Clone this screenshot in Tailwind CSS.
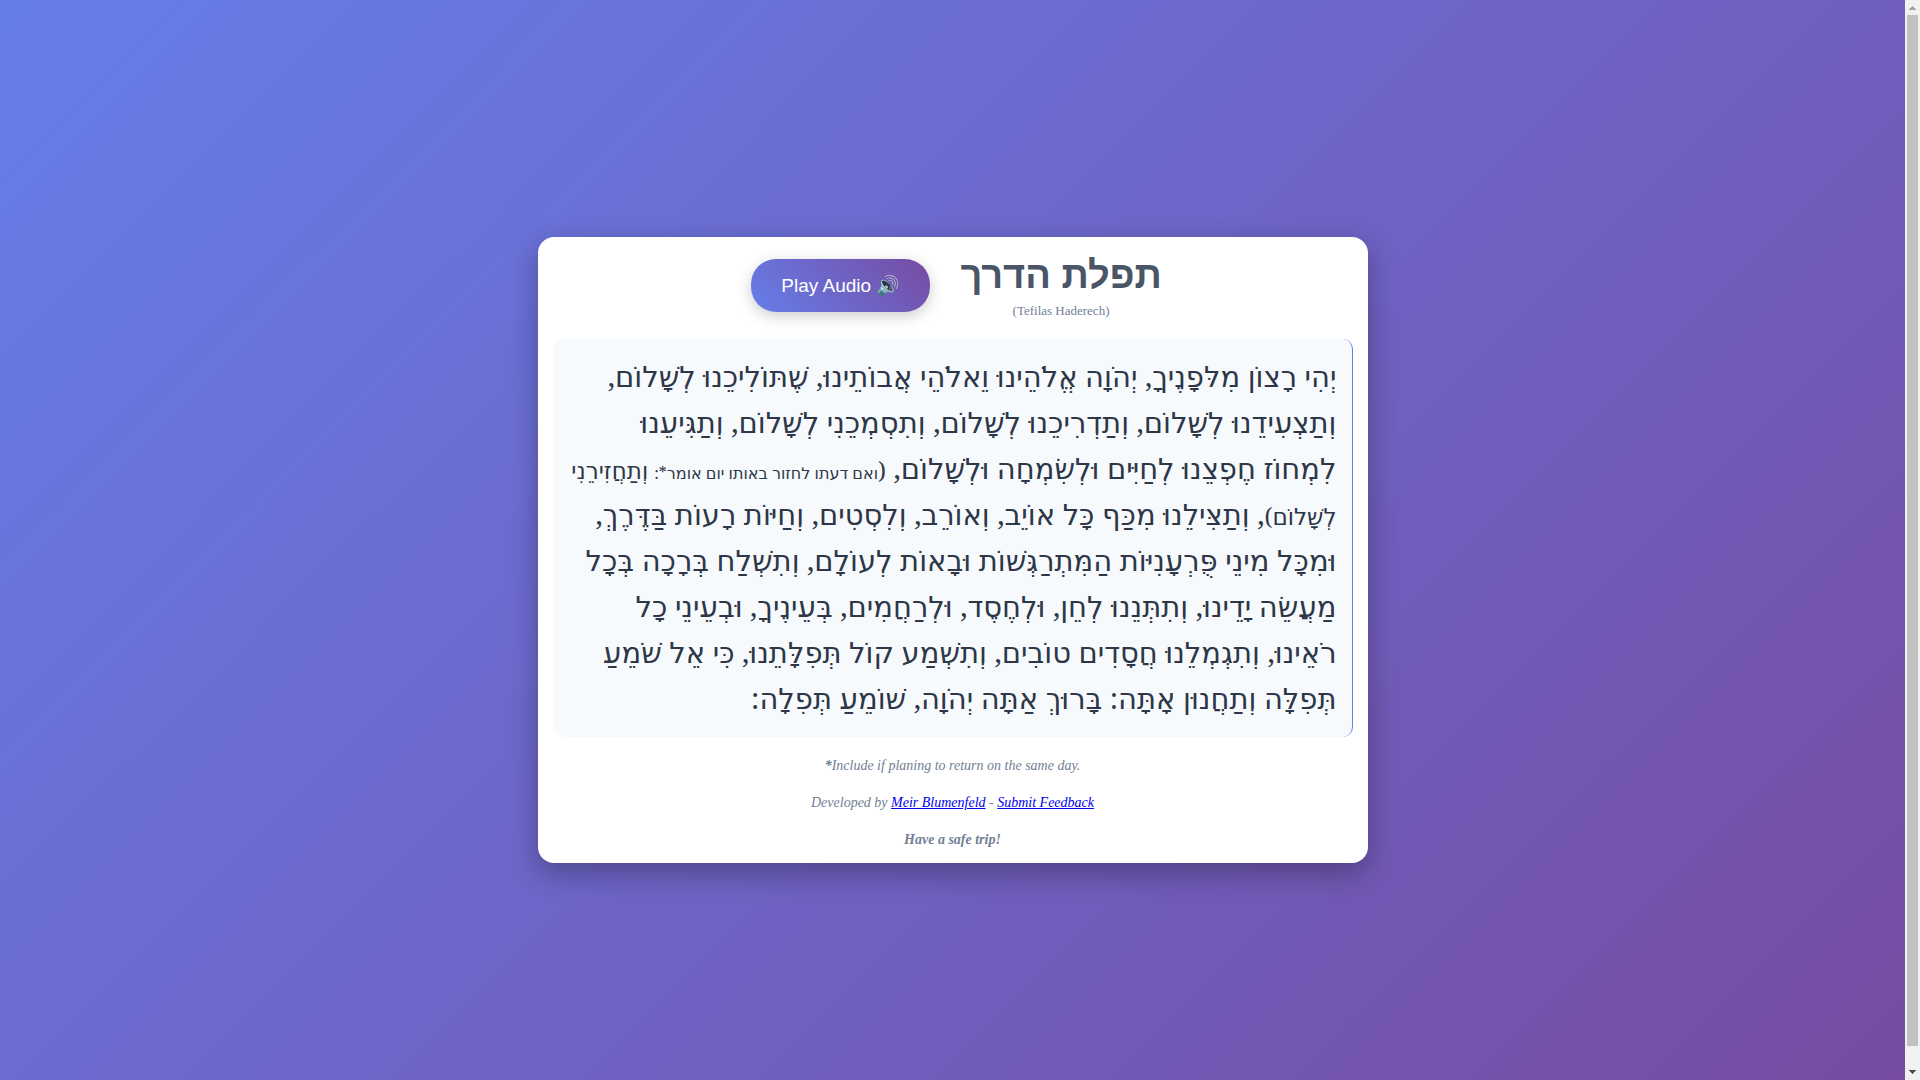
<!DOCTYPE html>
<html lang="en">
<head>
    <meta charset="UTF-8">
    <meta name="viewport" content="width=device-width, initial-scale=1.0">
    <title>Tefilas Haderech</title>
    <script src="https://cdn.jsdelivr.net/npm/@tailwindcss/browser@4"></script>
</head>
<body class="box-content flex min-h-screen items-center justify-center bg-linear-[135deg,#667eea_0%,#764ba2_100%] py-[10px] font-['Liberation_Serif',serif]">
    <main class="mr-[15px] w-full max-w-[830px] rounded-2xl bg-white p-[15px] text-center shadow-[0_10px_30px_rgba(0,0,0,0.3)]">
        <header class="mb-5 flex items-center justify-center gap-[30px] pl-2">
            <button type="button" class="rounded-[25px] bg-linear-[45deg,#667eea,#764ba2] px-[30px] py-[15px] font-['Liberation_Sans',sans-serif] text-[19px] leading-[23px] text-white shadow-[0_4px_15px_rgba(0,0,0,0.2)]">Play Audio 🔊</button>
            <div>
                <h1 lang="he" dir="rtl" class="font-['Liberation_Sans',sans-serif] text-[38px] leading-[46px] font-bold text-[#4a5568]">תפלת הדרך</h1>
                <p class="mt-1 text-[13px] leading-[17px] text-[#718096]">(Tefilas Haderech)</p>
            </div>
        </header>

        <p lang="he" dir="rtl" class="rounded-[10px] border-r border-[#667eea] bg-[#f7fafc] px-[15px] pt-3.5 pb-4 text-right font-['Noto_Serif','Noto_Sans','DejaVu_Sans',sans-serif] text-[29px] leading-[46px] text-[#2d3748]">
            יְהִי רָצוֹן מִלּפָנֶיךָ, יְהֹוָה אֱלֹהֵינוּ וֵאלֹהֵי אֲבוֹתֵינוּ, שֶׁתּוֹלִיכֵנוּ לְשָׁלוֹם, וְתַצְעִידֵנוּ לְשָׁלוֹם, וְתַדְרִיכֵנוּ לְשָׁלוֹם, וְתִסְמְכֵנִי לְשָׁלוֹם, וְתַגִּיעֵנוּ לִמְחוֹז חֶפְצֵנוּ לְחַיִּים וּלְשִׂמְחָה וּלְשָׁלוֹם, <span class="text-[23px] leading-none">(<span class="text-[16px]">ואם דעתו לחזור באותו יום אומר*:</span> וְתַחֲזִירֵנִי לְשָׁלוֹם)</span>, וְתַצִּילֵנוּ מִכַּף כָּל אוֹיֵב, וְאוֹרֵב, וְלִסְטִים, וְחַיּוֹת רָעוֹת בַּדֶּרֶךְ, וּמִכָּל מִינֵי פֻּרְעָנִיּוֹת הַמִּתְרַגְּשׁוֹת וּבָאוֹת לְעוֹלָם, וְתִשְׁלַח בְּרָכָה בְּכָל מַעֲשֵׂה יָדֵינוּ, וְתִתְּנֵנוּ לְחֵן, וּלְחֶסֶד, וּלְרַחֲמִים, בְּעֵינֶיךָ, וּבְעֵינֵי כָל רֹאֵינוּ, וְתִגְמְלֵנוּ חֲסָדִים טוֹבִים, וְתִשְׁמַע קוֹל תְּפִלָּתֵנוּ, כִּי אֵל שֹׁמֵעַ תְּפִלָּה וְתַחֲנוּן אָתָּה: בָּרוּךְ אַתָּה יְהֹוָה, שׁוֹמֵעַ תְּפִלָה:
        </p>

        <footer class="mt-5 space-y-5 text-[14px] leading-[17px] text-[#718096] italic">
            <p><strong>*</strong>Include if planing to return on the same day.</p>
            <p>Developed by <a href="#" class="text-[#0000ee] underline">Meir Blumenfeld</a> - <a href="#" class="text-[#0000ee] underline">Submit Feedback</a></p>
            <p class="font-bold">Have a safe trip!</p>
        </footer>
    </main>

    <!-- scroll bar -->
    <div aria-hidden="true" class="fixed inset-y-0 right-0 flex w-[15px] flex-col items-center bg-[#f1f1f1]">
        <svg class="size-[15px] shrink-0" viewBox="0 0 15 15" shape-rendering="crispEdges"><path d="M7 6h1v1h1v1h1v1h1v1H4V9h1V8h1V7h1z" fill="#a3a3a3"/></svg>
        <div class="mb-[19px] w-[11px] flex-1 bg-[#c1c1c1]"></div>
        <svg class="size-[15px] shrink-0" viewBox="0 0 15 15" shape-rendering="crispEdges"><path d="M4 5h7v1h-1v1H9v1H8v1H7V8H6V7H5V6H4z" fill="#505050"/></svg>
    </div>
</body>
</html>
